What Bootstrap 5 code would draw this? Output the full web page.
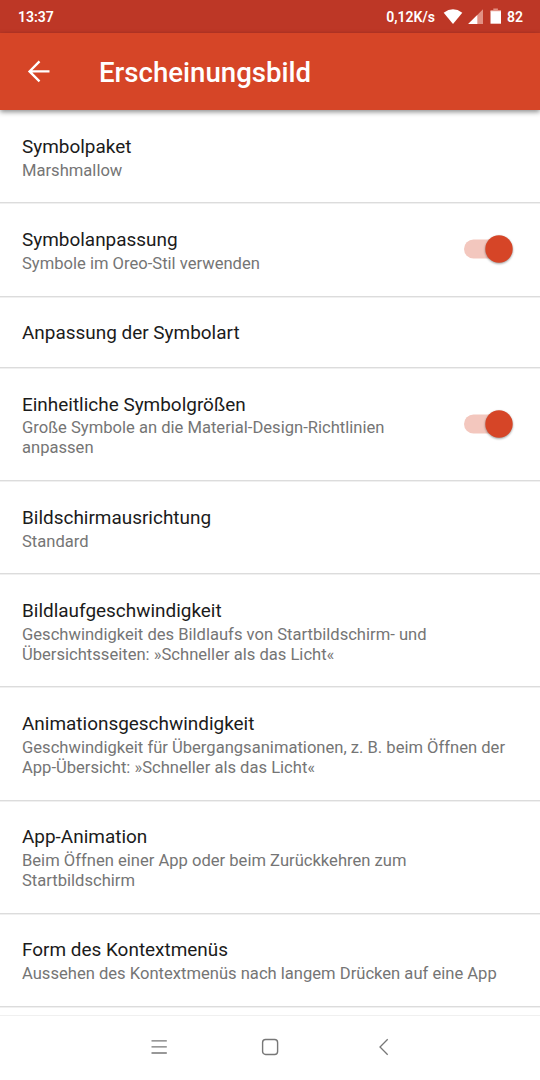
<!DOCTYPE html>
<html lang="de">
<head>
<meta charset="utf-8">
<meta name="viewport" content="width=device-width, initial-scale=1">
<title>Erscheinungsbild</title>
<link href="https://cdn.jsdelivr.net/npm/bootstrap@5.3.0/dist/css/bootstrap.min.css" rel="stylesheet">
<style>
body{font-family:Roboto,sans-serif;height:1080px;overflow:hidden;background:#fff}
svg{display:block;flex-shrink:0}
.statusbar{height:33px;background:#bd3726;font-size:14px;font-weight:600;line-height:34px;padding:0 17px 0 18px}
.appbar{height:77px;background:#d64527;box-shadow:0 2px 5px rgba(0,0,0,.45);padding-left:27px;z-index:1}
.appbar h1{font-size:27.6px;font-weight:500;line-height:32px;margin:3px 0 0 48px}
.settings{height:905px}
.settings .pref{padding:24.8px 22px 0;border:0;border-bottom:1px solid #dcdcdc!important;border-radius:0;height:93.35px;flex-shrink:0;background:none;box-shadow:0 1px 0 #f0f0f0}
.settings .pref.single{height:71.2px}
.settings .pref.tall{height:113.1px}
.pref h2{font-size:18.95px;font-weight:400;line-height:23px;color:#1b1b1b;margin:0}
.pref p{font-size:16.58px;line-height:20px;color:#757575;margin:2.8px 0 0;white-space:nowrap}
.toggle{width:56px;height:36px;margin:3px 1px 0 0}
.tall .toggle{margin-top:13.2px}
.navkeys{height:65px;border-top:1px solid #f0f0f0;padding:0 0 2px 150px}
.key-home{margin-left:93px}
.key-back{margin-left:99px}
</style>
</head>
<body class="d-flex flex-column">
<div class="statusbar text-white d-flex flex-shrink-0 align-items-center">
<span>13:37</span><span class="ms-auto">0,12K/s</span>
<svg class="ms-2" width="20" height="20" viewBox="0 0 20 20"><path fill="#fff" d="M.7 5.8Q10-1.1 19.3 5.8L10 16.9Z"/></svg>
<svg width="18" height="20" viewBox="0 0 18 20" style="margin-left:4px"><path fill="#e29184" d="M16 2.3v14.6H1.2Z"/><path fill="#fff" d="M10.3 8v8.9H1.2Z"/></svg>
<svg width="12" height="20" viewBox="0 0 12 20" style="margin-left:5px"><path fill="#e29184" d="M3.3 1.4h4.6V3H11v2H.5V3h2.8Z"/><path fill="#fff" d="M.5 4.2H11v12.5H.5Z"/></svg>
<span style="margin-left:5px">82</span>
</div>
<header class="appbar text-white d-flex flex-shrink-0 align-items-center position-relative">
<svg width="24" height="24" viewBox="0 0 24 24" fill="none" stroke="#fff" stroke-width="2.3"><path d="M22.5 11.4H2.3M12.5 1.4l-10 10 10 10"/></svg>
<h1>Erscheinungsbild</h1>
</header>
<main class="settings list-group list-group-flush flex-shrink-0 overflow-hidden">
<div class="pref list-group-item"><h2>Symbolpaket</h2><p>Marshmallow</p></div>
<div class="pref list-group-item d-flex align-items-start justify-content-between"><div><h2>Symbolanpassung</h2><p>Symbole im Oreo-Stil verwenden</p></div>
<svg class="toggle" viewBox="0 0 56 36"><rect x="3" y="8.5" width="44" height="19" rx="9.5" fill="#f3c7be"/><circle cx="38" cy="18" r="13.7" fill="#d64527" style="filter:drop-shadow(0 1px 1px #0006)"/></svg></div>
<div class="pref single list-group-item"><h2>Anpassung der Symbolart</h2></div>
<div class="pref tall list-group-item d-flex align-items-start justify-content-between"><div><h2>Einheitliche Symbolgrößen</h2><p>Große Symbole an die Material-Design-Richtlinien<br>anpassen</p></div>
<svg class="toggle" viewBox="0 0 56 36"><rect x="3" y="8.5" width="44" height="19" rx="9.5" fill="#f3c7be"/><circle cx="38" cy="18" r="13.7" fill="#d64527" style="filter:drop-shadow(0 1px 1px #0006)"/></svg></div>
<div class="pref list-group-item"><h2>Bildschirmausrichtung</h2><p>Standard</p></div>
<div class="pref tall list-group-item"><h2>Bildlaufgeschwindigkeit</h2><p>Geschwindigkeit des Bildlaufs von Startbildschirm- und<br>Übersichtsseiten: »Schneller als das Licht«</p></div>
<div class="pref tall list-group-item"><h2>Animationsgeschwindigkeit</h2><p>Geschwindigkeit für Übergangsanimationen, z. B. beim Öffnen der<br>App-Übersicht: »Schneller als das Licht«</p></div>
<div class="pref tall list-group-item"><h2>App-Animation</h2><p>Beim Öffnen einer App oder beim Zurückkehren zum<br>Startbildschirm</p></div>
<div class="pref list-group-item"><h2>Form des Kontextmenüs</h2><p>Aussehen des Kontextmenüs nach langem Drücken auf eine App</p></div>
</main>
<nav class="navkeys d-flex flex-shrink-0 align-items-center">
<svg width="18" height="18" viewBox="0 0 18 18" fill="none" stroke="#777" stroke-width="1.3"><path d="M1.5 2.8h15.3M1.5 8.9h15.3M1.5 15h15.3"/></svg>
<svg class="key-home" width="18" height="18" viewBox="0 0 18 18" fill="none" stroke="#777" stroke-width="1.4"><rect x="1.6" y="1.5" width="15" height="15" rx="3"/></svg>
<svg class="key-back" width="18" height="18" viewBox="0 0 18 18" fill="none" stroke="#777" stroke-width="1.3"><path d="M9.7 1.2 2 9l7.7 7.8"/></svg>
</nav>
<script src="https://cdn.jsdelivr.net/npm/bootstrap@5.3.0/dist/js/bootstrap.bundle.min.js"></script>
</body>
</html>
